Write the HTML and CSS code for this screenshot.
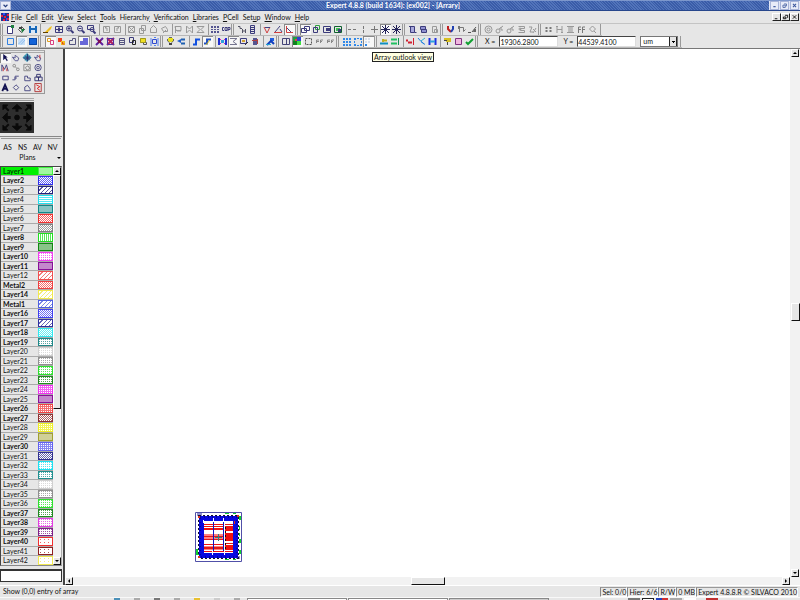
FILE: index.html
```html
<!DOCTYPE html>
<html lang="en">
<head>
<meta charset="utf-8">
<title>Expert 4.8.8</title>
<link rel="stylesheet" href="styles.css">
</head>
<body>
<header class="titlebar">
  <button class="sysmenu" aria-label="Window menu"><svg viewBox="0 0 9 9"><path d="M2 3.500l2.500 2.500 2.500-2.500" fill="none" stroke="#223a7a" stroke-width="1.500"/></svg></button>
  <h1>Expert 4.8.8 (build 1634): [ex002] - [Arrary]</h1>
  <div class="winbtns">
    <button aria-label="Minimize"><svg viewBox="0 0 9 9"><path d="M3 6h3" stroke="#3a569c" stroke-width="1.500"/></svg></button>
    <button aria-label="Restore"><svg viewBox="0 0 9 9"><path d="M4 2.500h3v3M2.500 4h3v3h-3z" fill="none" stroke="#3a569c"/></svg></button>
    <button aria-label="Close"><svg viewBox="0 0 9 9"><path d="M2.500 2.500l4 4m0-4l-4 4" stroke="#3a569c" stroke-width="1.300"/></svg></button>
  </div>
</header>
<nav class="menubar">
  <svg class="logo" viewBox="0 0 8 8"><path fill="#203090" d="M0 0h8v8H0z"/><path fill="#e02040" d="M0 2h2v2H0zM3 3h2v2H3zM6 1h2v2H6zM2 6h2v2H2zM6 5h2v2H6z"/><path fill="#3050ff" d="M2 0h2v2H2zM5 5h1v3H5z"/></svg>
  <ul>
    <li><a href="#"><u>F</u>ile</a></li><li><a href="#"><u>C</u>ell</a></li><li><a href="#"><u>E</u>dit</a></li><li><a href="#"><u>V</u>iew</a></li><li><a href="#"><u>S</u>elect</a></li><li><a href="#"><u>T</u>ools</a></li><li><a href="#">Hierarch<u>y</u></a></li><li><a href="#"><u>V</u>erification</a></li><li><a href="#"><u>L</u>ibraries</a></li><li><a href="#"><u>P</u>Cell</a></li><li><a href="#">Set<u>u</u>p</a></li><li><a href="#"><u>W</u>indow</a></li><li><a href="#"><u>H</u>elp</a></li>
  </ul>
  <div class="mdibtns">
    <button aria-label="Minimize document"><svg viewBox="0 0 8 7"><path d="M2 5.500h3" stroke="#000"/></svg></button>
    <button aria-label="Restore document"><svg viewBox="0 0 8 7"><path d="M3.500 1.500h3v3M1.500 3.500h3v2h-3z" fill="none" stroke="#000"/></svg></button>
    <button aria-label="Close document"><svg viewBox="0 0 8 7"><path d="M2 1.500l4 4m0-4l-4 4" stroke="#000"/></svg></button>
  </div>
</nav>
<div class="bars">
  <div class="toolbar" id="bar-main"></div>
  <div class="toolbar">
    <div class="tools" id="bar-view"></div>
    <label for="cx">X =</label><input id="cx" value="19306.2800">
    <label for="cy">Y =</label><input id="cy" value="44539.4100">
    <select id="unit" aria-label="Units"><option>um</option></select>
    <span class="sep"></span>
  </div>
</div>
<main>
  <aside>
    <section class="palette" id="palette"></section>
    <section class="navigator">
      <button aria-label="Pan"><svg viewBox="0 0 33 30"><g fill="#0a0a0a" stroke="#0a0a0a"><path d="M16.500 1.500l5 4.500h-10zM16.500 28.500l5-4.500h-10zM1.500 15l5-5v10zM31.500 15l-5-5v10z"/><path stroke-width="3" d="M16.500 4v5M16.500 26v-5M5 15h5M28 15h-5"/><circle cx="16.500" cy="15" r="2.500"/><path d="M2 2h5L2 7zM31 2h-5l5 5zM2 28h5l-5-5zM31 28h-5l5-5z"/><path stroke-width="2" d="M3 3l5 5M30 3l-5 5M3 27l5-5M30 27l-5-5"/></g></svg></button>
    </section>
    <section class="layers">
      <div class="modes"><button>AS</button><button>NS</button><button>AV</button><button>NV</button></div>
      <button class="plans">Plans<i></i></button>
      <div class="listbox">
        <ul id="layer-list"></ul>
        <div class="vscroll"><button class="arrow up" aria-label="Scroll layers up"></button><div class="thumb"></div><div class="track"></div><button class="arrow down" aria-label="Scroll layers down"></button></div>
      </div>
    </section>
    <input class="command" aria-label="Command">
  </aside>
  <div class="canvas">
    <div class="tip">Array outlook view</div>
    <svg class="chip" viewBox="0 0 47 50">
      <path fill="#fff" stroke="#5050a8" d="M.5.5h46v49H.5z"/>
      <path fill="#9090d0" d="M2 1h5v3H2zM41 44h4v3h-4z"/>
      <path fill="#10d030" d="M30 1h4v1h-4zM38 1h3v1h-3zM44 4h2v4h-2zM44 14h1v4h-1zM44 27h2v4h-2zM44 38h2v4h-2zM1 37h2v4H1zM1 41h3v2H1zM30 47h4v1h-4zM38 47h3v1h-3zM44 21h1v3h-1z"/>
      <path fill="none" stroke="#101030" stroke-width="2" stroke-dasharray="2 2" d="M4 4h39v42H4z"/>
      <path fill="none" stroke="#0808e0" stroke-width="5" d="M6.500 6.500h34v37h-34z"/>
      <path fill="none" stroke="#000060" stroke-dasharray="1 3" d="M5 5h37v40H5z"/>
      <path fill="#f01010" d="M9 12h20v1H9zM9 14h20v1H9zM9 16h20v2H9zM9 32h20v1H9zM9 39h29v1H9zM30 14h8v5h-8zM30 21h8v8h-8zM30 33h8v5h-8z"/>
      <path fill="#ff8080" d="M9 22h20v6H9zM9 34h20v4H9z"/>
      <path fill="#e01818" d="M9 24h20v1H9zM9 27h20v1H9zM9 35h20v2H9zM30 12h8v1h-8zM30 31h8v1h-8z"/>
      <path stroke="#1010c0" d="M18.500 10v29M28.500 10v29"/>
      <path stroke="#111" stroke-dasharray="2 2" d="M30.500 15v24"/>
      <path fill="#fff" d="M17 38h1v5h-1zM29 38h1v5h-1zM8 8h1v3H8zM18 6h1v4h-1zM28 6h1v4h-1z"/>
      <path stroke="#308080" d="M20 25.500h7M23.500 22v7"/>
      <path fill="#e03020" d="M3 4h2v2H3zM42 3h2v2h-2zM3 44h2v2H3zM39 9h1v3h-1z"/>
    </svg>
  </div>
  <div class="vscroll view-v"><button class="arrow up" aria-label="Scroll up"></button><div class="track"></div><div class="thumb"></div><div class="track"></div><button class="arrow down" aria-label="Scroll down"></button></div>
  <div class="hscroll"><button class="arrow left" aria-label="Scroll left"></button><div class="track"></div><div class="thumb"></div><div class="track"></div><button class="arrow right" aria-label="Scroll right"></button></div>
</main>
<footer class="status">
  <p>Show (0,0) entry of array</p>
  <span>Sel: 0/0</span><span>Hier: 6/6</span><span>R/W</span><span>0 MB</span><span>Expert 4.8.8.R © SILVACO 2010</span>
</footer>
<div class="taskbar">
  <div class="launch"><i class="teal"></i><i></i><i class="dark"></i><i></i><i class="gold"></i><i class="pale"></i><i></i></div>
  <div class="task"></div><div class="task"></div><div class="task active"></div>
  <div class="tray"><i class="dark"></i><i class="box"></i><i class="flag"></i><i></i><i class="white"></i><i class="red"></i></div>
</div>
<script src="app.js"></script>
</body>
</html>
```
FILE: styles.css
```css
* { box-sizing: border-box; margin: 0; padding: 0; }
html, body { height: 100%; }
body {
  display: flex; flex-direction: column; overflow: hidden;
  background: #e6e6e6; color: #111;
  font: 7px/9px Lato, "Liberation Sans", sans-serif;
}
button, input, select { font: inherit; color: inherit; border: 0; background: none; border-radius: 0; outline: 0; }
ul { list-style: none; }
svg { display: block; }
a { color: inherit; text-decoration: none; }

.titlebar {
  display: flex; flex: none; height: 11px; align-items: center;
  background: repeating-linear-gradient(45deg, #3a5ca8 0 1px, #5274ba 1px 2px);
  border-top: 1px solid #7d97cc; border-bottom: 1px solid #27468c;
}
.titlebar h1 { flex: 1; text-align: center; font-size: 7px; font-weight: bold; color: #fff; padding-left: 6px; }
.titlebar button { width: 9px; height: 9px; background: #e8ecf8; border: 1px solid #a8b4d8; }
.titlebar .sysmenu { width: 11px; }
.titlebar svg { width: 7px; height: 7px; margin: auto; }
.winbtns { display: flex; gap: 1px; background: #dfe5f5; padding: 0 1px; }

.menubar { display: flex; flex: none; align-items: center; height: 12px; padding: 0 1px; }
.menubar ul { display: flex; flex: 1; gap: 4px; padding-left: 2px; }
.logo { width: 8px; height: 8px; }
.mdibtns { display: flex; }
.mdibtns button { width: 9px; height: 8px; background: #e6e6e6; border: 1px solid; border-color: #fff #222 #222 #fff; }
.mdibtns svg { width: 7px; height: 6px; }

.bars { flex: none; border-top: 1px solid #c4c4c4; border-bottom: 1px solid #777; }
.toolbar { display: flex; height: 12px; width: max-content; align-items: center; border-bottom: 1px solid #b8b8b8; }
.tools { display: flex; align-items: center; }
.tool { width: 11px; height: 11px; flex: none; }
.tool svg { width: 11px; height: 11px; }
.tool.pressed { background: #f8f8f8; box-shadow: inset 1px 1px #888; }
.sep, .grip { flex: none; width: 4px; height: 11px; background: linear-gradient(#999, #999) 2px 0 / 1px 100% no-repeat; }
.sep.narrow { width: 3px; }
.grip { width: 5px; border-left: 1px solid #999; background-position: 1px 0; }
.grip.wide { width: 7px; }
.toolbar label { padding: 0 4px 0 5px; }
.toolbar input { width: 59px; height: 11px; background: #fff; border: 1px solid; border-color: #444 #ddd #ddd #444; margin-right: 2px; }
.toolbar input + label { padding-left: 3px; }
.toolbar select {
  width: 38px; height: 11px; appearance: none; margin-left: 2px; padding-left: 2px; border: 1px solid #777;
  background: linear-gradient(#000, #000) 31px 4px / 3px 1px no-repeat, linear-gradient(#000, #000) 32px 5px / 1px 1px no-repeat,
    linear-gradient(90deg, #fff 28px, #222 28px 29px, #e6e6e6 29px 35px, #222 35px);
}

main { flex: 1; min-height: 0; display: grid; grid-template: 1fr 8px / 63px 1fr 10px; }
aside { grid-row: 1 / 3; display: flex; flex-direction: column; min-height: 0; padding: 1px 1px 3px 0; }
.palette {
  display: grid; grid-template-columns: repeat(4, 11px); align-self: start;
  border: 1px solid #999; border-left: 0; border-top: 1px solid #aaa; padding-top: 2px;
  background: linear-gradient(#aaa, #aaa) 0 1px / 100% 1px no-repeat;
}
.palette .tool { height: 10px; }
.palette .tool svg { height: 10px; }
.navigator { margin-top: 4px; align-self: start; padding-top: 3px; border-top: 1px solid #aaa; background: linear-gradient(#999, #999) 0 1px / 100% 1px no-repeat; }
.navigator button { display: block; background: #2e2e2e; padding: 0 1px; }
.navigator svg { width: 32px; height: 31px; }
.layers { flex: 1; min-height: 0; display: flex; flex-direction: column; margin-top: 3px; border-top: 1px solid #888; padding-top: 4px; }
.layers::before { content: ""; border-top: 1px solid #999; margin: -3px 1px 0; }
.modes { display: grid; grid-template-columns: repeat(4, 15px); padding-top: 4px; }
.plans { position: relative; padding: 1px 7px 1px 0; margin-bottom: 3px; }
.plans i { position: absolute; right: 1px; top: 5px; border: 2px solid transparent; border-top-color: #000; }
.listbox { display: flex; flex: 1; min-height: 0; border: 1px solid; border-color: #444 #aaa #888 #444; }
.listbox ul { flex: 1; overflow: hidden; }
.listbox li { display: flex; height: 9px; line-height: 9px; border-bottom: 1px solid #aaa; padding-left: 2px; }
.listbox li:nth-child(even) { height: 10px; }
.listbox li b, .listbox li span { width: 35px; }
.listbox li.current { background: #00f000; color: #004000; }
.swatch { --p: color-mix(in srgb, var(--c) 75%, #fff); flex: 1; border: 1px solid var(--c); }
.solid { background: color-mix(in srgb, var(--c) 50%, #fff); }
.checker { background: conic-gradient(var(--p) 25%, #fff 0 50%, var(--p) 0 75%, #fff 0) 0 0 / 2px 2px; }
.diag { background: repeating-linear-gradient(135deg, #fff 0 2px, var(--p) 2px 3px); }
.hlines { background: repeating-linear-gradient(#fff 0 1px, var(--p) 1px 2px); }
.vlines { background: repeating-linear-gradient(90deg, #fff 0 1px, var(--p) 1px 2px); }
.dots { background: conic-gradient(#fff 75%, var(--p) 0) 0 0 / 2px 2px; }
.dense { background: conic-gradient(var(--p) 75%, #fff 0) 0 0 / 2px 2px; }
.sparse { background: conic-gradient(at 1px 1px, #fff 75%, var(--p) 0) 1px 1px / 4px 3px; }

.vscroll { display: flex; flex-direction: column; background: #f2f2f2; }
.arrow { width: 8px; height: 8px; flex: none; display: grid; place-items: center; background: #e6e6e6; border: 1px solid; border-color: #fff #111 #111 #fff; }
.arrow::before { content: ""; border: 2px solid transparent; }
.up::before { border-top: 0; border-bottom-color: #000; }
.down::before { border-bottom: 0; border-top-color: #000; }
.left::before { border-left: 0; border-right-color: #000; }
.right::before { border-right: 0; border-left-color: #000; }
.track { flex: 1; }
.thumb { flex: none; background: #e6e6e6; border: 1px solid; border-color: #fff #111 #111 #fff; }
.listbox .thumb { flex: 234 0 0; }
.listbox .track { flex: 150 0 0; }
.command { width: 100%; height: 13px; margin-top: 3px; flex: none; background: #fff; border: 1px solid #333; border-width: 2px 1px 1px; }

.canvas { position: relative; background: #fff; border-left: 2px solid #444; }
.tip { position: absolute; left: 307px; top: 3px; height: 10px; line-height: 8px; padding: 0 1px; background: #ffffe1; border: 1px solid #222; white-space: nowrap; }
.chip { position: absolute; left: 130px; bottom: 15px; width: 47px; height: 50px; }
.view-v { padding: 0 0 0 1px; }
.view-v .thumb { height: 18px; }
.view-v .track:first-of-type { flex: 247; }
.view-v .track:last-of-type { flex: 250; }
.hscroll { grid-column: 2 / 4; display: flex; background: #f2f2f2; border-left: 2px solid #444; padding-right: 10px; }
.hscroll .thumb { width: 34px; }

.status { display: flex; flex: none; height: 12px; align-items: center; padding-right: 2px; border-top: 1px solid #fff; white-space: nowrap; }
.status p { flex: 1; padding-left: 3px; }
.status span { height: 10px; padding-left: 1px; border: 1px solid; border-color: #999 #fff #fff #888; line-height: 9px; }

.taskbar { display: flex; flex: none; height: 3px; border-top: 1px solid #f8f8f8; gap: 1px; }
.launch { width: 246px; display: flex; justify-content: flex-end; gap: 14px; padding-right: 6px; }
.task { width: 100px; background: #fff; border: 1px solid #888; border-bottom: 0; }
.task.active { background: #ccc; }
.tray { display: flex; gap: 2px; margin-left: auto; padding-right: 82px; }
.taskbar i { width: 12px; background: #aaa; }
.launch i { width: 6px; }
.taskbar .teal { background: #4a90b8; }
.taskbar .dark { background: #777; }
.taskbar .gold { background: #e8c030; }
.taskbar .pale { background: #ccc; }
.taskbar .box { background: #fff; border: 1px solid #222; border-bottom: 0; }
.taskbar .flag { background: linear-gradient(90deg, #2040c0 50%, #d03030 50%); }
.taskbar .white { background: #fff; }
.taskbar .red { background: #c03030; margin-left: 8px; }
```
FILE: app.js
```js
const NAVY = '#3c3c7c';
const line = (d, c = NAVY, w = 1) => `<path d="${d}" fill="none" stroke="${c}" stroke-width="${w}"/>`;
const fill = (d, c = NAVY) => `<path d="${d}" fill="${c}"/>`;
const ring = (x, y, r, c = NAVY) => `<circle cx="${x}" cy="${y}" r="${r}" fill="none" stroke="${c}"/>`;
const G = '#999';
const lens = ring(5, 4.5, 2.5) + line('M7 6.5L9.500 9', NAVY, 2);
const page = line('M3.500 2.500h4v6h-4z', G);

const icons = {
  new: fill('M3 2h5v7H3z', '#fff') + line('M2.500 2.500h5v7h-5z') + fill('M6 1h3v3H6z', '#208040'),
  open: line('M2.500 5.500l3-3 3 3-3 3z', '#555') + fill('M5 5h4L6 9z', '#208040') + fill('M3 3h3v2H3z', '#444'),
  save: fill('M2 2h8v7H2z', '#1868b8') + fill('M4 2h4v2H4zM4 6h4v3H4z', '#d8e8f8'),
  pencil: fill('M3 8l5-5 2-1-1 3-3 3z', '#f0c020') + line('M1 8.500h5', '#604000'),
  fit: line('M2.500 2.500h7v6h-7zM6 2v7M2 5.500h8') + fill('M5 4h2v3H5z'),
  zoomin: lens + line('M3.500 4.500h3M5 3v3'),
  zoomout: lens + line('M3.500 4.500h3'),
  zoombox: line('M1.500 1.500h6v4h-6z') + ring(6, 5.5, 2) + line('M7 7l2.500 2.500', NAVY, 2),
  undo: line('M2.500 2.500h6v6h-6zM6 7V4H4l1-1', G),
  redo: line('M2.500 2.500h6v6h-6zM5 7V4h2L6 3', G),
  cut: line('M2.500 2.500h6v6h-6zM3 3l5 5m0-5L3 8', G),
  copy: line('M4.500 1.500h4v5h-4zM2.500 4.500h4v5h-4z', G),
  paste: line('M2.500 4.500l3-3 3 3v4h-6z', G),
  paste2: line('M2.500 4.500l4-2 2 3v2h-4zM4 9l3-3', G),
  flag: line('M2 2.500h6v4H3zM2.500 3v6M4 7h4', G),
  mirrorh: line('M2.500 2v7l3-3 3 3V2l-3 3z', G),
  mirrorv: line('M2 2.500h7l-3 3 3 3H2l3-3z', G),
  grid: fill('M2 2h2v2H2zM5 2h2v2H5zM8 2h2v2H8zM2 5h2v1H2zM5 5h2v1H5zM8 5h2v1H8zM2 7h2v2H2zM5 7h2v2H5zM8 7h2v2H8z', '#555590'),
  snap: line('M4 3.500H2.500v3H4M5 3.500h2v3H5zM8 3v4M8 3.500h2v2H8') ,
  axes: line('M2 2.500h2v2h2M6.500 5v4M9.500 5v4M7 7h3', '#556'),
  calc: line('M3.500 1.500h4v8h-4z') + fill('M4 3h3v1H4zM4 5h3v1H4zM4 7h3v1H4z'),
  tri: line('M2 3l3 6 3-6', '#d04040') + line('M3 3.500h5', '#444480'),
  angle: line('M1 8.500h8', '#d04040') + line('M2 8l5-6M7 5l2 3', '#444480'),
  ortho: line('M2.500 2v6.500H9', '#d04040') + line('M3 4l4 4', '#444480'),
  cascade: line('M4.500 2.500h5v4h-5zM1.500 4.500h5v4h-5z'),
  cascadeg: line('M4.500 1.500h4v4h-4z', '#30a040') + line('M2.500 3.500h4v5h-4z'),
  inner: line('M1.500 2.500h7v6h-7z') + fill('M4 4h4v3H4z'),
  innerg: line('M1.500 2.500h7v6h-7z', '#106030') + fill('M3 4h4v3H3z', '#40c050') + fill('M5 5h3v3H5z'),
  dash: line('M1 5.500h3M6 5.500h3', '#777'),
  vbar: line('M5.500 2v3M5.500 6v3', '#777'),
  plus: line('M5.500 2v7M2 5.500h7', '#777'),
  star: line('M5.500 1v9M1 5.500h9M2 2l7 7M9 2L2 9', '#222258'),
  doc: line('M2 2.500h5.500v6h2M3.500 2v6.500h4') + fill('M4 3h3v5H4z', '#a8a8dc'),
  docs: line('M2.500 2.500h5v3h-5zM3.500 5.500h5v3h-5z') + fill('M3 3h4v2H3zM4 6h4v2H4z', '#9090d0'),
  docg: page + line('M5.500 5.500h3v3h-3z', G),
  magnet: line('M3 2v3l3 3', '#c02020', 2) + line('M8 2v3L6 8', '#2040b0', 2),
  arc: line('M3.500 8V3.500h4v4l2-2', '#777') + fill('M2 2h2v3H2z', '#777'),
  ramp: line('M1 8.500h3M5 8l4-5', '#555') + fill('M7 5h2v3H6z', '#666'),
  target: ring(5.5, 5.5, 3.5, G) + ring(5.5, 5.5, 1.5, G),
  link: ring(4, 7, 2, G) + line('M5 5l4-3M7 3v3h2', G),
  stack: line('M2.500 2.500h6v2h-4v2h4v2h-6', G) + ring(4, 5, 1, G),
  key: line('M2 3h3L3 8h3M6 5l3 3M9 4L6 9', G),
  quad: line('M3.500 3v2M7.500 3v2M3.500 6v2M7.500 6v2', '#777', 2),
  ibeam: line('M3 2v7M8 2v7M3 5.500h5M2 2.500h2M7 8.500h2', G),
  column: line('M2 2.500h7M4 3v6M7 3v6M2 8.500h7', G) + fill('M4 3h3v5H4z', '#bbb'),
  ff: line('M2.500 9V3H5M2.500 5.500H5M6.500 9V3H9M6 5.500h3', '#777'),
  find: line('M5.500 2l3 3-3 3-3-3zM7 7l2 2', G),

  sel: line('M2.500 2.500h6v6h-6z', '#3080e0'),
  selh: fill('M2 2h7v7H2z', '#c8e0f8') + line('M2.500 8l5-5M5 8.500L9 4', '#90bcec'),
  self: fill('M2 2h8v7H2z', '#1464d8') + line('M2.500 2.500h7v6h-7z', '#0848a8'),
  yr: line('M2.500 2.500h3v3h-3z', '#e0a020') + line('M5.500 4.500h3v4h-3z', '#d84080'),
  ry: fill('M2 2h4v4H2z', '#f04020') + fill('M5 5h4v4H5z', '#f0c020') + line('M6.500 6v2h2', '#e04020'),
  polyo: line('M2.500 8.500v-4h3v-2h3v6z', '#555580'),
  polyf: fill('M2 9V5h3V2h5v7z', '#6868d8'),
  cross: line('M2 2l7 7M9 2L2 9', '#6020a0', 2) + fill('M4 4h3v3H4z', '#801050'),
  cross2: line('M2 2l7 7M9 2L2 9', '#b02060', 2) + line('M2.500 2.500h6v6h-6z', '#5030a0'),
  list: line('M3.500 2.500h5v6h-5zM4 4.500h4M4 6.500h4', '#555580'),
  over: line('M2.500 1.500h4v5h-4z') + line('M5.500 4.500h3v4h-3z', '#222', 1),
  yell: fill('M2 2h6v5H2z', '#f0e020') + line('M5.500 6.500h3v2h-3z', '#555560') + line('M2.500 2.500h5v4h-5z', '#a09820'),
  array: line('M3.500 3.500h4v4h-4z', '#3048d0') + line('M2 2v8M9 2v8M5 1.500h2M5 9.500h2', '#5080f0'),
  bulb: fill('M3 2h5v4H3z', '#e8e020') + line('M4 1.500h3M2.500 3v2l2 1.500M8.500 3v2l-2 1.500', '#666') + fill('M4 7h3v2H4z', '#444'),
  nav: fill('M1 5l4-2v4z', '#2060d0') + line('M5 3.500h4M5 7.500h4', '#2060b0', 2),
  zig: line('M2 8.500h3v-5h4', '#1050e0', 2),
  zigy: line('M2 7.500h3v-4h4', '#2050c0', 2) + line('M4 9l4-5', '#d8c020'),
  cutx: line('M2 2v7M9 2v7', '#2030d0', 2) + line('M3 3l5 5M8 3L3 8', '#d020c0') + fill('M4 4h3v3H4z', '#30a0e0'),
  sigma: line('M2 2.500h7L5 5.500l4 3H2', '#777790'),
  img: line('M1.500 2.500h6v5h-6z') + fill('M3 4h3v2H3z', '#d0a030') + line('M6 9l3-3', '#333'),
  bug: fill('M3 2h4v7H3z', '#555590') + line('M7.500 3v5M2 4.500h6', '#b04040'),
  runner: fill('M5 2h4v3H5z', '#2060e0') + line('M2 9l4-4 3 3', '#1040c0', 2) + line('M1 8.500h5', '#20a0d0'),
  split: line('M1.500 2.500h7v6h-7zM5.500 3v5', '#444478'),
  mosaic: fill('M1 1h4v4H1z', '#20a040') + fill('M5 1h4v4H5z', '#3040d0') + fill('M1 5h4v4H1z', '#108020') + fill('M5 5h4v4H5z', '#40e040') + fill('M3 3h2v2H3z', '#e04040'),
  dotbox: `<path d="M2.500 2.500h6v6h-6z" fill="none" stroke="#555" stroke-dasharray="2 1"/>`,
  ffs: line('M2.500 7V4H5M6.500 7V4H9M2 5.500h3M6 5.500h2', '#888'),
  blues: fill('M2 2h2v2H2zM5 2h2v2H5zM8 2h2v2H8zM2 5h2v2H2zM5 5h2v2H5zM8 5h2v2H8zM2 8h2v2H2zM5 8h2v2H5zM8 8h2v2H8z', '#3088e8'),
  bluer: fill('M2 2h2v2H2zM5 2h2v1H5zM8 2h2v2H8zM2 5h1v2H2zM9 5h1v2H9zM2 8h2v2H2zM5 9h2v1H5zM8 8h2v2H8z', '#3088e8'),
  faint: fill('M2 2h2v2H2zM5 2h2v2H5zM2 5h2v2H2zM5 5h2v2H5z', '#d8e0ec') + fill('M2 8h2v2H2z', '#3088e8'),
  alignc: line('M1 7.500h8', '#1090c0', 2) + line('M4 3v3M5 4.500h3', '#c0b020', 2),
  alignr: line('M1 3.500h6M1 7.500h6', '#20c060', 2) + line('M8.500 2v7', '#109050'),
  gapr: line('M1 4.500h2M3 6.500h4', '#d02030', 2) + line('M8.500 2v7', '#d02030'),
  fork: line('M2 2l3 3.500 4 3M8 8l-3-2.500', '#2080e0') + line('M5 5l4-3', '#30b0d0'),
  hbar: line('M2.500 2v7M8.500 2v7', '#2030e0', 2) + line('M3 5.500h5', '#30a0e0', 2),
  stamp: fill('M2 2h7v4H4V4H2z', '#d8c020') + line('M5.500 6v3M2 4.500h3', '#444'),
  pink: fill('M3 3h5v5H3z', '#f0b8e0') + line('M2.500 2.500h6v6h-6z', '#803080'),
  check: line('M2 6l2 2 5-5', '#10a030', 2),

  arrow: fill('M3 1v7l2-2 2 3 1-1-2-3h2z', '#101050'),
  hand: line('M1 4.500l3 1v-3l4 3-1 3H4z', '#555590'),
  move: fill('M5 0l5 5-5 5-5-5z', '#40a0b8') + line('M5.500 1v8M1 5.500h8M3 3l5 5M8 3L3 8', '#303070'),
  handr: line('M1 4.500l3 1v-3l4 3-1 3H4z', '#555590') + line('M7 2v4', '#e03030'),
  wave: line('M1.500 9V2l3 5 2-5 2 7') + line('M3 9V5M7 9V6', '#d03030'),
  nodes: ring(3, 3, 1.5, '#888') + ring(7, 7, 1.5, '#888') + line('M4 4l2 2', '#888'),
  boxed: line('M1.500 1.500h7v7h-7zM3 5l3-2 2 3-3 2z', '#888'),
  donut: ring(5, 5, 3.5, '#444480') + ring(5, 5, 1.5, '#444480'),
  rect: line('M2.500 3.500h6v4h-6z'),
  path: line('M1 7.500h3v-4h4M3 5.500h3', '#444480'),
  lshape: line('M2.500 3.500h3v2h3v3h-6z', '#444480'),
  cells: line('M3.500 1.500h4v3h-4zM1.500 4.500h4v4h-4zM5.500 4.500h4v4h-4z', '#333370'),
  text: line('M2 9l3-7 3 7M3 6.500h4', '#101050', 2),
  diamond: line('M5 2l3 3-3 3-3-3z', '#444480'),
  halfmoon: line('M2.500 8.500v-4l3-2 3 4v2z', '#444480'),
  redz: line('M1.500 .5h7v9h-7z', '#b03030') + line('M3 2l4 2-3 2 3 2', '#e02020')
};

/* "|" ":" separators, "#" "##" grips, "*" marks a pressed button */
function build(id, spec) {
  document.getElementById(id).innerHTML = spec.split(' ').map(t => {
    if (t === '|') return '<span class="sep"></span>';
    if (t === ':') return '<span class="sep narrow"></span>';
    if (t === '#') return '<span class="grip"></span>';
    if (t === '##') return '<span class="grip wide"></span>';
    const name = t.replace('*', '');
    return `<button class="tool${t !== name ? ' pressed' : ''}" aria-label="${name}"><svg viewBox="0 0 11 11">${icons[name]}</svg></button>`;
  }).join('');
}
build('bar-main', '# new open save | pencil fit zoomin zoomout zoombox | undo redo : cut copy paste paste2 : flag mirrorh mirrorv : grid snap # axes calc | tri angle *ortho # *cascade cascadeg inner innerg : dash vbar plus *star star # doc docs docg # magnet arc ramp # target link link stack key # quad ibeam column ff find |');
build('bar-view', '# sel *selh self ## *yr ry polyo *polyf # cross cross2 list over yell array # bulb nav | zig *zigy | cutx *sigma img bug | runner # split *mosaic dotbox ffs ffs # blues bluer *faint # alignc alignr | gapr fork hbar | stamp pink check #');
build('palette', '*arrow hand move handr wave nodes boxed donut rect path lshape cells text diamond halfmoon redz');

const layers = `Layer1 b #40f040 solid
Layer2 b #3030f0 checker
Layer3 n #202080 diag
Layer4 n #20e0f0 hlines
Layer5 n #108888 solid
Layer6 n #f03030 checker
Layer7 n #808080 checker
Layer8 b #20e020 vlines
Layer9 b #108810 solid
Layer10 b #f040f0 dots
Layer11 b #881098 solid
Layer12 n #f05050 diag
Metal2 b #f04040 checker
Layer14 b #f0e850 diag
Metal1 b #5060e0 diag
Layer16 b #4040f0 checker
Layer17 b #3030a0 diag
Layer18 b #30e8f0 checker
Layer19 b #208888 dots
Layer20 n #d0d0d0 dots
Layer21 n #909090 dots
Layer22 n #30e030 dots
Layer23 n #208820 dots
Layer24 n #f030f0 dense
Layer25 n #881098 solid
Layer26 b #f04040 dense
Layer27 b #903030 checker
Layer28 n #f0f020 dense
Layer29 n #a0a030 solid
Layer30 b #6060f0 dense
Layer31 n #303090 checker
Layer32 n #20e0f0 dots
Layer33 n #209090 dots
Layer34 n #d0d0d0 dots
Layer35 n #909090 dots
Layer36 n #30e030 dots
Layer37 b #208820 dots
Layer38 b #e040e0 dots
Layer39 b #802088 dots
Layer40 b #f03030 sparse
Layer41 n #902020 sparse
Layer42 n #f0e850 sparse`;
document.getElementById('layer-list').innerHTML = layers.split('\n').map((row, i) => {
  const [name, weight, color, pattern] = row.split(' ');
  const tag = weight === 'b' ? 'b' : 'span';
  return `<li${i ? '' : ' class="current"'}><${tag}>${name}</${tag}><div class="swatch ${pattern}" style="--c:${color}"></div></li>`;
}).join('');
```
